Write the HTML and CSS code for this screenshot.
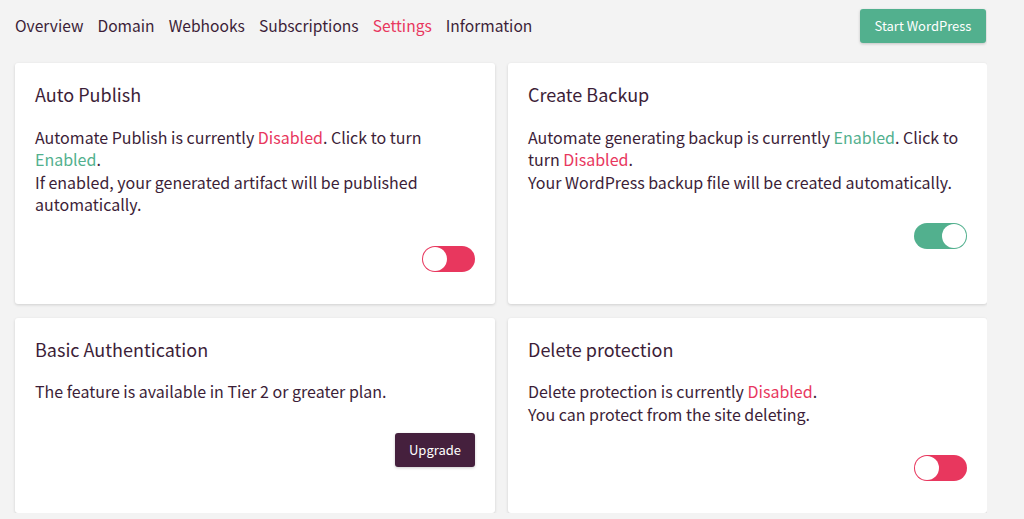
FILE: index.html
```html
<!DOCTYPE html>
<html lang="en">
<head>
<meta charset="utf-8">
<link rel="stylesheet" href="styles.css">
</head>
<body>
<header class="topbar">
  <nav class="tabs">
    <a class="tab">Overview</a>
    <a class="tab">Domain</a>
    <a class="tab">Webhooks</a>
    <a class="tab">Subscriptions</a>
    <a class="tab active">Settings</a>
    <a class="tab">Information</a>
  </nav>
  <button class="btn btn-green">Start WordPress</button>
</header>
<main class="grid">
  <section class="card">
    <h2 class="card-title">Auto Publish</h2>
    <p class="card-text">Automate Publish is currently <span class="red">Disabled</span>. Click to turn <span class="green">Enabled</span>.<br>If enabled, your generated artifact will be published automatically.</p>
    <div class="card-actions"><span class="toggle off"><span class="knob"></span></span></div>
  </section>
  <section class="card">
    <h2 class="card-title">Create Backup</h2>
    <p class="card-text">Automate generating backup is currently <span class="green">Enabled</span>. Click to turn <span class="red">Disabled</span>.<br>Your WordPress backup file will be created automatically.</p>
    <div class="card-actions"><span class="toggle on"><span class="knob"></span></span></div>
  </section>
  <section class="card">
    <h2 class="card-title">Basic Authentication</h2>
    <p class="card-text">The feature is available in Tier 2 or greater plan.</p>
    <div class="card-actions"><button class="btn btn-dark">Upgrade</button></div>
  </section>
  <section class="card">
    <h2 class="card-title">Delete protection</h2>
    <p class="card-text">Delete protection is currently <span class="red">Disabled</span>.<br>You can protect from the site deleting.</p>
    <div class="card-actions"><span class="toggle off"><span class="knob"></span></span></div>
  </section>
</main>
</body>
</html>
```
FILE: styles.css
```css
* { box-sizing: border-box; }
html, body { margin: 0; padding: 0; }
body {
  background: #f3f3f3;
  font-family: "Noto Sans CJK JP", "Noto Sans", sans-serif;
  color: #3c1e38;
  width: 987px;
  padding: 9px 0 0 15px;
}
.topbar {
  display: flex;
  align-items: center;
  justify-content: space-between;
  height: 34px;
}
.tabs { display: flex; gap: 14px; font-size: 15.6px; margin-top: -2px; }
.tab { color: #3c1e38; }
.tab.active { color: #e8375e; }
.btn {
  border: none;
  border-radius: 3px;
  font-family: inherit;
  font-size: 13px;
  color: #fff;
  height: 34px;
  box-shadow: 0 1px 3px rgba(0,0,0,0.2);
}
.btn-green { background: #52b08e; width: 126px; margin-right: 1px; margin-top: -1px; }
.btn-dark { background: #45203d; width: 80px; }
.grid {
  margin-top: 20px;
  display: grid;
  grid-template-columns: 480px 479px;
  column-gap: 13px;
  row-gap: 14px;
}
.card {
  background: #fff;
  border-radius: 3px;
  box-shadow: 0 1px 3px rgba(0,0,0,0.15);
  padding: 19px 20px 32px;
}
.card-title {
  margin: 0;
  font-size: 18px;
  font-weight: 400;
  line-height: 25px;
}
.card-text {
  margin: 18.5px 0 0;
  font-size: 16px;
  line-height: 22.5px;
}
.red { color: #e8375e; }
.green { color: #52b08e; }
.card-actions {
  padding-top: 30px;
  display: flex;
  justify-content: flex-end;
}
.toggle {
  width: 53px;
  height: 26px;
  border-radius: 13px;
  display: flex;
  align-items: center;
  padding: 1px;
}
.toggle.off { background: #e8375e; justify-content: flex-start; }
.toggle.on { background: #52b08e; justify-content: flex-end; }
.knob {
  width: 24px;
  height: 24px;
  border-radius: 50%;
  background: #fff;
}
```
